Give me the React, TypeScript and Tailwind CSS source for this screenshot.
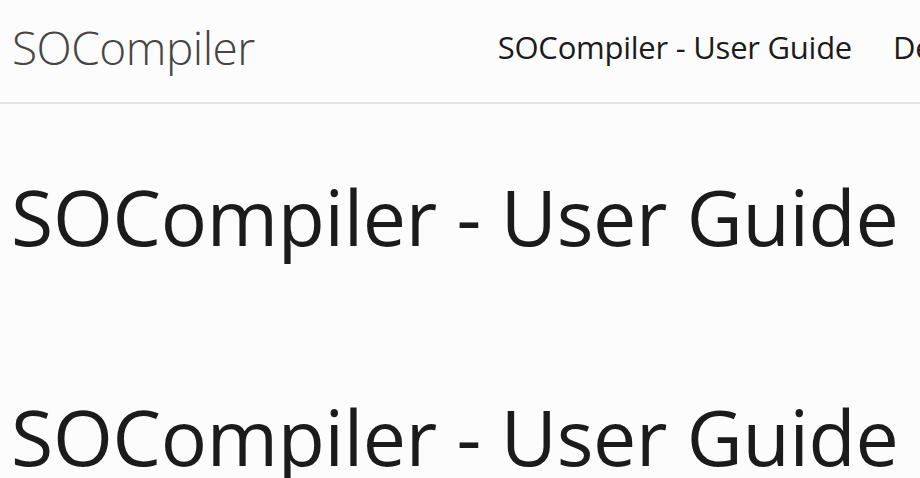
import React from 'react';

const navItems = ['SOCompiler - User Guide', 'Developer Guide'];

const App = () => {
  return (
    <div className="h-[478px] w-[920px] overflow-hidden bg-[#fcfcfc] font-['Open_Sans','Noto_Sans',sans-serif] text-[#1b1b1b]">
      <header className="flex h-[104px] items-center border-b-2 border-[#e5e5e5] pb-[8px] pl-[12px] whitespace-nowrap">
        <a className="text-[46px] font-light leading-none tracking-[-0.5px] text-[#454545]">SOCompiler</a>
        <nav className="ml-[243px] flex gap-[41px]">
          {navItems.map((item) => (
            <a key={item} className="text-[31px] leading-none tracking-[-0.25px]">
              {item}
            </a>
          ))}
        </nav>
      </header>

      <main className="pl-[11px] whitespace-nowrap">
        <h1 className="mt-[67px] text-[77px] leading-[1.2] tracking-[-0.3px]">SOCompiler - User Guide</h1>
        <h1 className="mt-[128px] text-[77px] leading-[1.2] tracking-[-0.3px]">SOCompiler - User Guide</h1>
      </main>
    </div>
  );
};

export default App;
